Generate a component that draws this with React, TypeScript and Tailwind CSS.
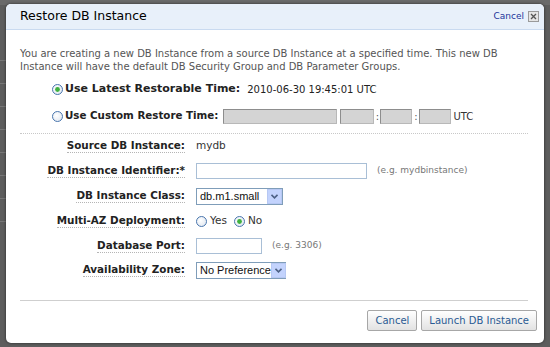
import React from "react";

const sans = { fontFamily: '"DejaVu Sans", Verdana, sans-serif' };
const arial = { fontFamily: '"Liberation Sans", Arial, sans-serif' };

function Radio({ checked, id }: { checked?: boolean; id: string }) {
  return (
    <svg width="11" height="11" viewBox="0 0 11 11" className="shrink-0">
      <defs>
        <radialGradient id={id} cx="0.4" cy="0.4" r="0.7">
          <stop offset="0" stopColor="#ffffff" />
          <stop offset="1" stopColor="#dfe6ef" />
        </radialGradient>
      </defs>
      <circle cx="5.5" cy="5.5" r="5" fill={`url(#${id})`} stroke="#4a76ad" strokeWidth="1" />
      {checked && <circle cx="5.5" cy="5.5" r="2.4" fill="#3fb13f" />}
    </svg>
  );
}

function Label({ children }: { children: React.ReactNode }) {
  return (
    <span className="font-bold text-[10.4px] text-[#222] border-b border-dotted border-[#b5b5b5] leading-[13px]">
      {children}
    </span>
  );
}

function Select({ value, width }: { value: string; width: string }) {
  return (
    <div
      className={`flex items-center justify-between h-[17px] border border-[#7f9db9] bg-white whitespace-nowrap ${width}`}
      style={arial}
    >
      <span className="text-[11px] text-[#111] pl-[3px] leading-none">{value}</span>
      <span className="w-[15px] h-[15px] bg-[#c3d3fd] border border-[#b7c8f3] flex items-center justify-center shrink-0">
        <svg width="7" height="5" viewBox="0 0 7 5">
          <path d="M0.5 0.8 L3.5 3.8 L6.5 0.8" stroke="#4d6185" strokeWidth="1.6" fill="none" />
        </svg>
      </span>
    </div>
  );
}

const grayBox = "h-[15px] bg-[#d4d4d4] border border-[#b8b8b8] border-t-[#8d8d8d] border-l-[#8d8d8d]";

export default function App() {
  return (
    <div className="w-[550px] h-[347px] bg-[#5d5d5d] relative overflow-hidden" style={sans}>
      {/* backdrop table hints */}
      <div className="absolute left-0 top-0 w-full h-[5px] bg-[#6a6a6a]" />
      <div className="absolute left-0 top-[60px] w-[6px] h-[280px] flex flex-col gap-[22px]">
        <div className="h-px bg-[#777]" />
        <div className="h-px bg-[#777]" />
        <div className="h-px bg-[#777]" />
        <div className="h-px bg-[#777]" />
        <div className="h-px bg-[#777]" />
        <div className="h-px bg-[#777]" />
        <div className="h-px bg-[#777]" />
        <div className="h-px bg-[#777]" />
      </div>

      {/* modal */}
      <div className="absolute left-[6px] top-[4px] w-[538px] h-[339px] bg-white rounded-[5px] shadow-[0_0_3px_rgba(0,0,0,0.6)] overflow-hidden flex flex-col">
        <div className="h-[26px] bg-[#e8f0fa] border-b border-[#c9daf0] flex items-center justify-between pl-[14px] pr-[5px] shrink-0">
          <span className="text-[12.5px] text-[#000]">Restore DB Instance</span>
          <div className="flex items-center gap-[4px]">
            <span className="text-[9px] text-[#22349a]">Cancel</span>
            <span className="w-[11px] h-[11px] border border-[#9a9a9a] bg-[#e5e5e5] flex items-center justify-center">
              <svg width="7" height="7" viewBox="0 0 7 7">
                <path d="M1 1 L6 6 M6 1 L1 6" stroke="#555" strokeWidth="1.3" />
              </svg>
            </span>
          </div>
        </div>

        <div className="px-[14px] pt-[17px] flex flex-col">
          <p className="text-[10px] leading-[13px] text-[#555]">
            You are creating a new DB Instance from a source DB Instance at a specified time. This new DB Instance will have the default DB Security Group and DB Parameter Groups.
          </p>

          <div className="mt-[8px] pl-[32px] flex flex-col">
            <div className="flex items-center gap-[2px] h-[16px]">
              <Radio checked id="r1" />
              <span className="font-bold text-[11px] text-[#222]">Use Latest Restorable Time:</span>
              <span className="text-[10px] text-[#222] ml-[5px]">2010-06-30 19:45:01 UTC</span>
            </div>
            <div className="flex items-center gap-[2px] h-[16px] mt-[11px]">
              <Radio id="r2" />
              <span className="font-bold text-[10.3px] text-[#222]">Use Custom Restore Time:</span>
              <div className="ml-[3px] flex items-center">
                <span className={`w-[114px] ${grayBox}`} />
                <span className={`w-[34px] ml-[3px] ${grayBox}`} />
                <span className="text-[10px] text-[#555] w-[6px] text-center">:</span>
                <span className={`w-[32px] ${grayBox}`} />
                <span className="text-[10px] text-[#555] w-[7px] text-center">:</span>
                <span className={`w-[32px] ${grayBox}`} />
                <span className="text-[10px] text-[#333] ml-[2px]">UTC</span>
              </div>
            </div>
          </div>

          <div className="mt-[9px] border-t border-dotted border-[#c8c8c8] w-[508px]" />

          <div className="grid grid-cols-[165px_1fr] gap-x-[11px] items-center mt-[2px]">
            <div className="flex justify-end items-center h-[20px]"><Label>Source DB Instance:</Label></div>
            <div className="text-[10.5px] text-[#333]">mydb</div>

            <div className="flex justify-end items-center mt-[5px] h-[20px]"><Label>DB Instance Identifier:*</Label></div>
            <div className="flex items-center mt-[5px]">
              <span className="w-[171px] h-[16px] border border-[#a9bfd6] bg-white" />
              <span className="ml-[10px] text-[9px] text-[#777]">(e.g. mydbinstance)</span>
            </div>

            <div className="flex justify-end items-center mt-[5px] h-[20px]"><Label>DB Instance Class:</Label></div>
            <div className="mt-[5px]"><Select value="db.m1.small" width="w-[87px]" /></div>

            <div className="flex justify-end items-center mt-[5px] h-[20px]"><Label>Multi-AZ Deployment:</Label></div>
            <div className="mt-[5px] flex items-center gap-[3px] text-[10.5px] text-[#333]">
              <Radio id="r3" />
              <span>Yes</span>
              <span className="ml-[1px]" />
              <Radio checked id="r4" />
              <span>No</span>
            </div>

            <div className="flex justify-end items-center mt-[5px] h-[20px]"><Label>Database Port:</Label></div>
            <div className="mt-[5px] flex items-center">
              <span className="w-[66px] h-[16px] border border-[#a9bfd6] bg-white" />
              <span className="ml-[10px] text-[9px] text-[#777]">(e.g. 3306)</span>
            </div>

            <div className="flex justify-end items-center mt-[4px] h-[20px]"><Label>Availability Zone:</Label></div>
            <div className="mt-[4px]"><Select value="No Preference" width="w-[90px]" /></div>
          </div>

          <div className="mt-[20px] border-t border-[#cfcfcf] w-[508px]" />

          <div className="flex justify-end gap-[4px] mt-[9px] mr-[-7px]">
            <button className="h-[21px] px-[7px] border border-[#a7a7a7] rounded-[2px] bg-gradient-to-b from-[#ffffff] to-[#e2e2e2] text-[10px] text-[#2a5b93]">Cancel</button>
            <button className="h-[21px] px-[7px] border border-[#a7a7a7] rounded-[2px] bg-gradient-to-b from-[#ffffff] to-[#e2e2e2] text-[10px] text-[#2a5b93]">Launch DB Instance</button>
          </div>
        </div>
      </div>
    </div>
  );
}
